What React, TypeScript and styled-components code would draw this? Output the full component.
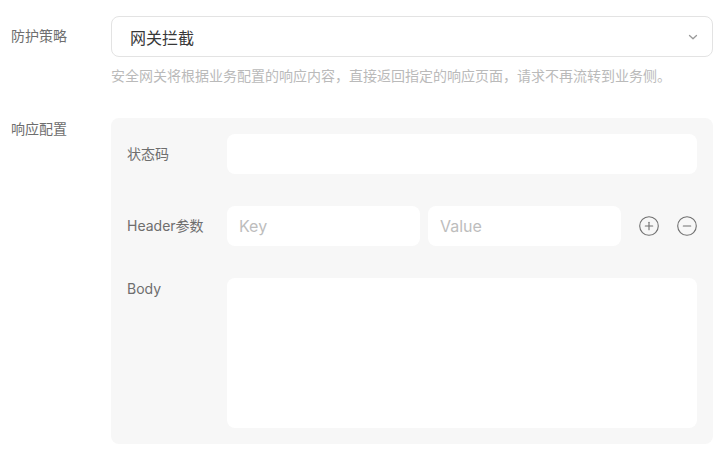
import React from "react";
import styled, { createGlobalStyle } from "styled-components";

const GlobalStyle = createGlobalStyle`
  html, body { margin: 0; padding: 0; background: #ffffff; }
  body {
    font-family: "Inter", "Noto Sans CJK SC", sans-serif;
    -webkit-font-smoothing: antialiased;
  }
  * { box-sizing: border-box; }
`;

const Page = styled.div`
  padding: 16px 14px 0 11px;
  width: 727px;
`;

const FormRow = styled.div<{ $gap?: number }>`
  display: grid;
  grid-template-columns: 100px 1fr;
  margin-top: ${(p) => p.$gap ?? 0}px;
`;

const Label = styled.div<{ $center?: boolean }>`
  font-size: 14px;
  line-height: 22px;
  color: #6e6e6e;
  height: ${(p) => (p.$center ? "40px" : "auto")};
  display: flex;
  align-items: ${(p) => (p.$center ? "center" : "flex-start")};
  white-space: nowrap;
`;

const Control = styled.div`
  display: flex;
  flex-direction: column;
  min-width: 0;
`;

const SelectBox = styled.div`
  height: 41px;
  border: 1px solid #e3e3e3;
  border-radius: 8px;
  background: #ffffff;
  display: flex;
  align-items: center;
  justify-content: space-between;
  padding: 0 13px 0 18px;
  font-size: 16px;
  color: #383838;
  cursor: pointer;
`;

const Help = styled.div`
  margin-top: 8px;
  font-size: 14px;
  line-height: 22px;
  color: #bababa;
  white-space: nowrap;
`;

const Panel = styled.div`
  background: #f7f7f7;
  border-radius: 8px;
  padding: 16px;
  display: flex;
  flex-direction: column;
  gap: 32px;
`;

const PanelRow = styled.div`
  display: grid;
  grid-template-columns: 100px 1fr;
`;

const Fields = styled.div`
  display: flex;
  align-items: center;
  gap: 8px;
`;

const TextInput = styled.input`
  height: 40px;
  width: 100%;
  min-width: 0;
  flex: 1;
  border: none;
  outline: none;
  border-radius: 8px;
  background: #ffffff;
  padding: 0 12px;
  font-family: "Inter", "Noto Sans CJK SC", sans-serif;
  font-size: 16px;
  color: #333333;
  &::placeholder { color: #bdbdbd; }
`;

const TextArea = styled.textarea`
  height: 150px;
  width: 100%;
  border: none;
  outline: none;
  resize: none;
  border-radius: 8px;
  background: #ffffff;
  padding: 9px 12px;
  font-family: "Inter", "Noto Sans CJK SC", sans-serif;
  font-size: 16px;
  color: #333333;
  display: block;
`;

const IconGroup = styled.div`
  display: flex;
  align-items: center;
  gap: 18px;
  margin-left: 10px;
`;

const IconButton = styled.button`
  width: 20px;
  height: 20px;
  padding: 0;
  border: none;
  background: transparent;
  display: flex;
  align-items: center;
  justify-content: center;
  cursor: pointer;
  color: #707070;
`;

const Chevron = () => (
  <svg width="12" height="12" viewBox="0 0 12 12" fill="none">
    <path d="M2.5 4.5 L6 7.8 L9.5 4.5" stroke="#9a9a9a" strokeWidth="1.3" strokeLinecap="round" strokeLinejoin="round" />
  </svg>
);

const CircleIcon = ({ plus }: { plus?: boolean }) => (
  <svg width="20" height="20" viewBox="0 0 20 20" fill="none">
    <circle cx="10" cy="10" r="9.3" stroke="currentColor" strokeWidth="1.1" />
    <path d="M6.3 10 H13.7" stroke="currentColor" strokeWidth="1.1" strokeLinecap="round" />
    {plus && <path d="M10 6.3 V13.7" stroke="currentColor" strokeWidth="1.1" strokeLinecap="round" />}
  </svg>
);

export default function App() {
  return (
    <>
      <GlobalStyle />
      <Page>
        <FormRow>
          <Label $center>防护策略</Label>
          <Control>
            <SelectBox role="combobox">
              <span>网关拦截</span>
              <Chevron />
            </SelectBox>
            <Help>安全网关将根据业务配置的响应内容，直接返回指定的响应页面，请求不再流转到业务侧。</Help>
          </Control>
        </FormRow>
        <FormRow $gap={31}>
          <Label>响应配置</Label>
          <Panel>
            <PanelRow>
              <Label $center>状态码</Label>
              <Fields>
                <TextInput />
              </Fields>
            </PanelRow>
            <PanelRow>
              <Label $center>Header参数</Label>
              <Fields>
                <TextInput placeholder="Key" />
                <TextInput placeholder="Value" />
                <IconGroup>
                  <IconButton aria-label="add"><CircleIcon plus /></IconButton>
                  <IconButton aria-label="remove"><CircleIcon /></IconButton>
                </IconGroup>
              </Fields>
            </PanelRow>
            <PanelRow>
              <Label>Body</Label>
              <TextArea />
            </PanelRow>
          </Panel>
        </FormRow>
      </Page>
    </>
  );
}
